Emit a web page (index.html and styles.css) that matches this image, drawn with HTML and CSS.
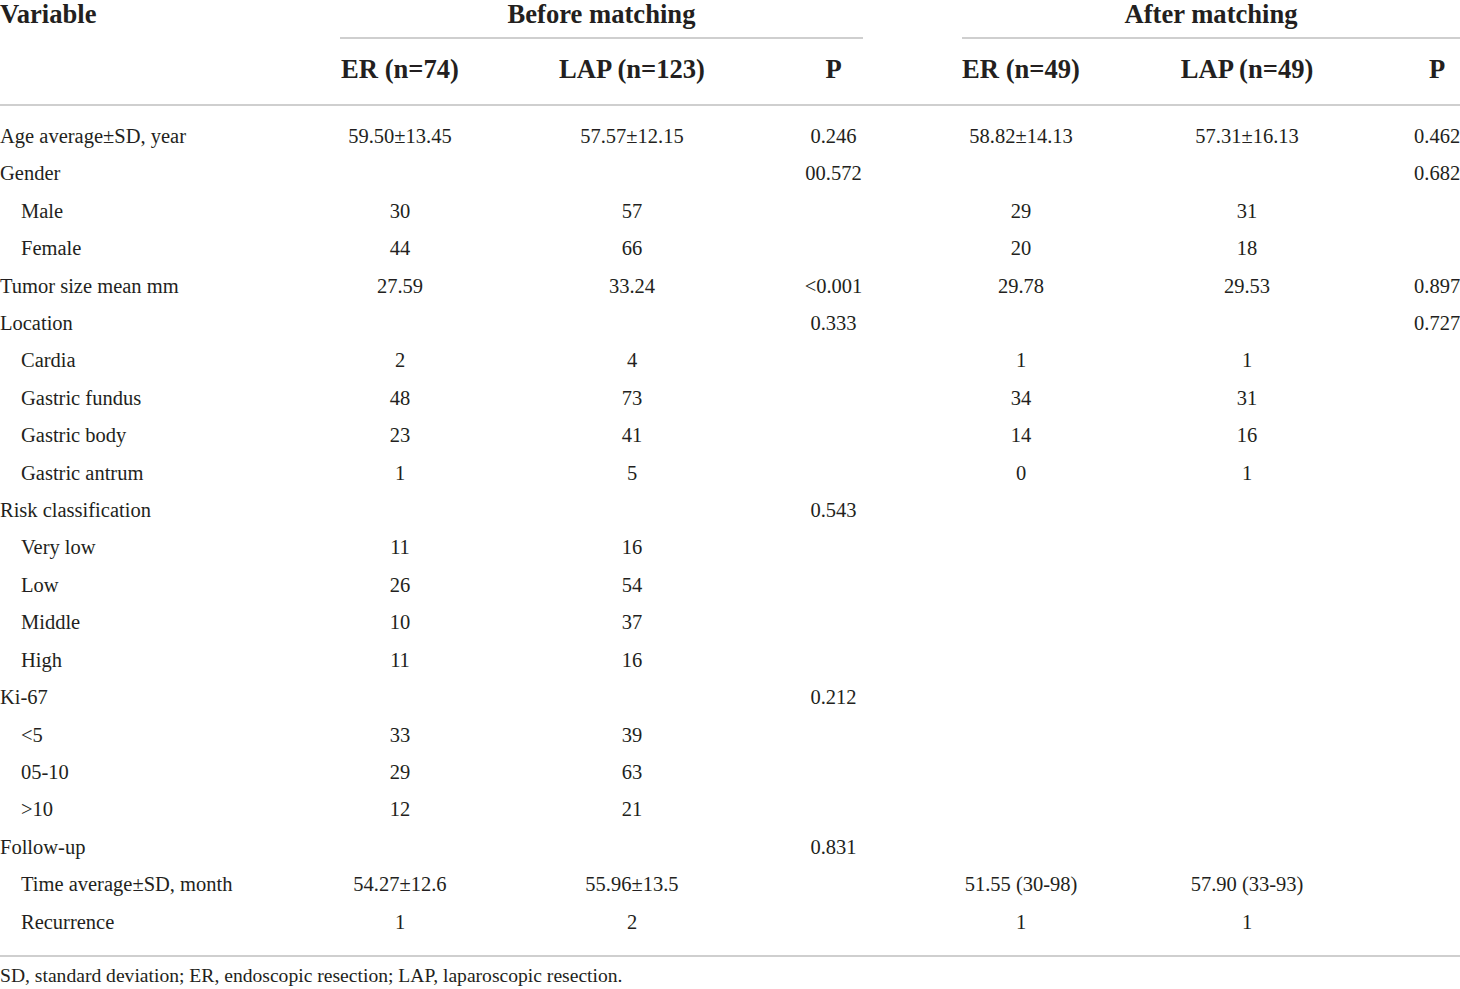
FILE: index.html
```html
<!DOCTYPE html>
<html lang="en">
<head>
  <meta charset="UTF-8">
  <title>Before and after matching</title>
  <link rel="stylesheet" href="styles.css">
</head>
<body>

  <table class="stats">
    <colgroup>
      <col class="c-var">
      <col class="c-er">
      <col class="c-lap">
      <col class="c-p">
      <col class="c-gap">
      <col class="c-er2">
      <col class="c-lap2">
      <col class="c-p2">
    </colgroup>
    <thead>
      <tr class="group">
        <th rowspan="2" class="var">Variable</th>
        <th colspan="3"><div class="span-line">Before matching</div></th>
        <th></th>
        <th colspan="3"><div class="span-line">After matching</div></th>
      </tr>
      <tr class="cols">
        <th>ER (n=74)</th>
        <th>LAP (n=123)</th>
        <th>P</th>
        <th></th>
        <th>ER (n=49)</th>
        <th>LAP (n=49)</th>
        <th>P</th>
      </tr>
    </thead>
    <tbody>
      <tr><td>Age average±SD, year</td><td>59.50±13.45</td><td>57.57±12.15</td><td>0.246</td><td></td><td>58.82±14.13</td><td>57.31±16.13</td><td>0.462</td></tr>
      <tr><td>Gender</td><td></td><td></td><td>00.572</td><td></td><td></td><td></td><td>0.682</td></tr>
      <tr class="sub"><td>Male</td><td>30</td><td>57</td><td></td><td></td><td>29</td><td>31</td><td></td></tr>
      <tr class="sub"><td>Female</td><td>44</td><td>66</td><td></td><td></td><td>20</td><td>18</td><td></td></tr>
      <tr><td>Tumor size mean mm</td><td>27.59</td><td>33.24</td><td>&lt;0.001</td><td></td><td>29.78</td><td>29.53</td><td>0.897</td></tr>
      <tr><td>Location</td><td></td><td></td><td>0.333</td><td></td><td></td><td></td><td>0.727</td></tr>
      <tr class="sub"><td>Cardia</td><td>2</td><td>4</td><td></td><td></td><td>1</td><td>1</td><td></td></tr>
      <tr class="sub"><td>Gastric fundus</td><td>48</td><td>73</td><td></td><td></td><td>34</td><td>31</td><td></td></tr>
      <tr class="sub"><td>Gastric body</td><td>23</td><td>41</td><td></td><td></td><td>14</td><td>16</td><td></td></tr>
      <tr class="sub"><td>Gastric antrum</td><td>1</td><td>5</td><td></td><td></td><td>0</td><td>1</td><td></td></tr>
      <tr><td>Risk classification</td><td></td><td></td><td>0.543</td><td></td><td></td><td></td><td></td></tr>
      <tr class="sub"><td>Very low</td><td>11</td><td>16</td><td></td><td></td><td></td><td></td><td></td></tr>
      <tr class="sub"><td>Low</td><td>26</td><td>54</td><td></td><td></td><td></td><td></td><td></td></tr>
      <tr class="sub"><td>Middle</td><td>10</td><td>37</td><td></td><td></td><td></td><td></td><td></td></tr>
      <tr class="sub"><td>High</td><td>11</td><td>16</td><td></td><td></td><td></td><td></td><td></td></tr>
      <tr><td>Ki-67</td><td></td><td></td><td>0.212</td><td></td><td></td><td></td><td></td></tr>
      <tr class="sub"><td>&lt;5</td><td>33</td><td>39</td><td></td><td></td><td></td><td></td><td></td></tr>
      <tr class="sub"><td>05-10</td><td>29</td><td>63</td><td></td><td></td><td></td><td></td><td></td></tr>
      <tr class="sub"><td>&gt;10</td><td>12</td><td>21</td><td></td><td></td><td></td><td></td><td></td></tr>
      <tr><td>Follow-up</td><td></td><td></td><td>0.831</td><td></td><td></td><td></td><td></td></tr>
      <tr class="sub"><td>Time average±SD, month</td><td>54.27±12.6</td><td>55.96±13.5</td><td></td><td></td><td>51.55 (30-98)</td><td>57.90 (33-93)</td><td></td></tr>
      <tr class="sub"><td>Recurrence</td><td>1</td><td>2</td><td></td><td></td><td>1</td><td>1</td><td></td></tr>
    </tbody>
  </table>

  <p class="footnote">SD, standard deviation; ER, endoscopic resection; LAP, laparoscopic resection.</p>

</body>
</html>
```

FILE: styles.css
```css
body {
  margin: 0;
  background: #fff;
  color: #231f20;
  font-family: "Liberation Serif", "Times New Roman", serif;
}
.stats {
  width: 1460px;
  table-layout: fixed;
  border-collapse: separate;
  border-spacing: 0;
}
.c-var { width: 340px; }
.c-er { width: 120px; }
.c-lap { width: 344px; }
.c-p { width: 59px; }
.c-gap { width: 99px; }
.c-er2 { width: 118px; }
.c-lap2 { width: 334px; }
.c-p2 { width: 46px; }

.stats th {
  padding: 0;
  font-size: 26.6px;
  font-weight: bold;
  text-align: center;
  white-space: nowrap;
  vertical-align: top;
}
.stats th.var {
  text-align: left;
  line-height: 29px;
  border-bottom: 2px solid #cfcfcf;
}
.group th {
  height: 39px;
}
.span-line {
  height: 37px;
  line-height: 29px;
  border-bottom: 2px solid #cfcfcf;
}
.cols th {
  line-height: 24px;
  padding-top: 18px;
  padding-bottom: 23px;
  border-bottom: 2px solid #cfcfcf;
}

.stats td {
  padding: 0;
  font-size: 20.5px;
  line-height: 37.4px;
  text-align: center;
  white-space: nowrap;
}
.stats td:first-child {
  text-align: left;
}
.sub td:first-child {
  padding-left: 21px;
}
tbody tr:first-child td {
  padding-top: 12px;
}
tbody tr:last-child td {
  padding-bottom: 14px;
  border-bottom: 2px solid #cfcfcf;
}
.footnote {
  margin: 0;
  padding-top: 8px;
  font-size: 19.6px;
  line-height: 22px;
  white-space: nowrap;
}
```
